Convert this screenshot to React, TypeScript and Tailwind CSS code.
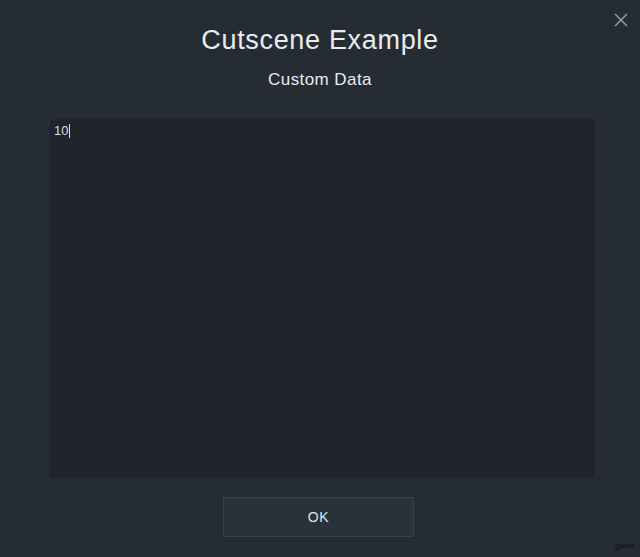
import { X } from 'lucide-react';

const App = () => {
    return (
        <div className="relative w-[640px] h-[557px] bg-[#262c34] font-['Liberation_Sans',sans-serif] text-[#e8ecef] flex flex-col items-center overflow-hidden">
            {/* Close */}
            <button className="absolute top-[9px] right-[8px] text-[#9aa3ab]">
                <X size={22} strokeWidth={1.5} />
            </button>

            <h1 className="mt-[24px] text-[27px] leading-[32px] tracking-wide">Cutscene Example</h1>
            <h2 className="mt-[14px] text-[17px] leading-[20px] tracking-wide">Custom Data</h2>

            <div className="mt-[29px] ml-[5px] w-[545px] h-[359px] bg-[#20252d] px-[4px] pt-[3px] leading-[16px]">
                <span className="text-[13px] text-[#d8dde2]">10</span>
                <span className="inline-block w-px h-[14px] bg-[#d8dde2] align-middle ml-px"></span>
            </div>

            <button className="mt-[19px] mr-[3px] w-[191px] h-[40px] bg-[#2a3239] border border-[#36434b] text-[14px] tracking-wider text-[#dfe4e8]">
                OK
            </button>

            <span className="absolute bottom-[5px] right-[5px] text-[8px] text-[#0e1014]">game</span>
        </div>
    );
};

export default App;
